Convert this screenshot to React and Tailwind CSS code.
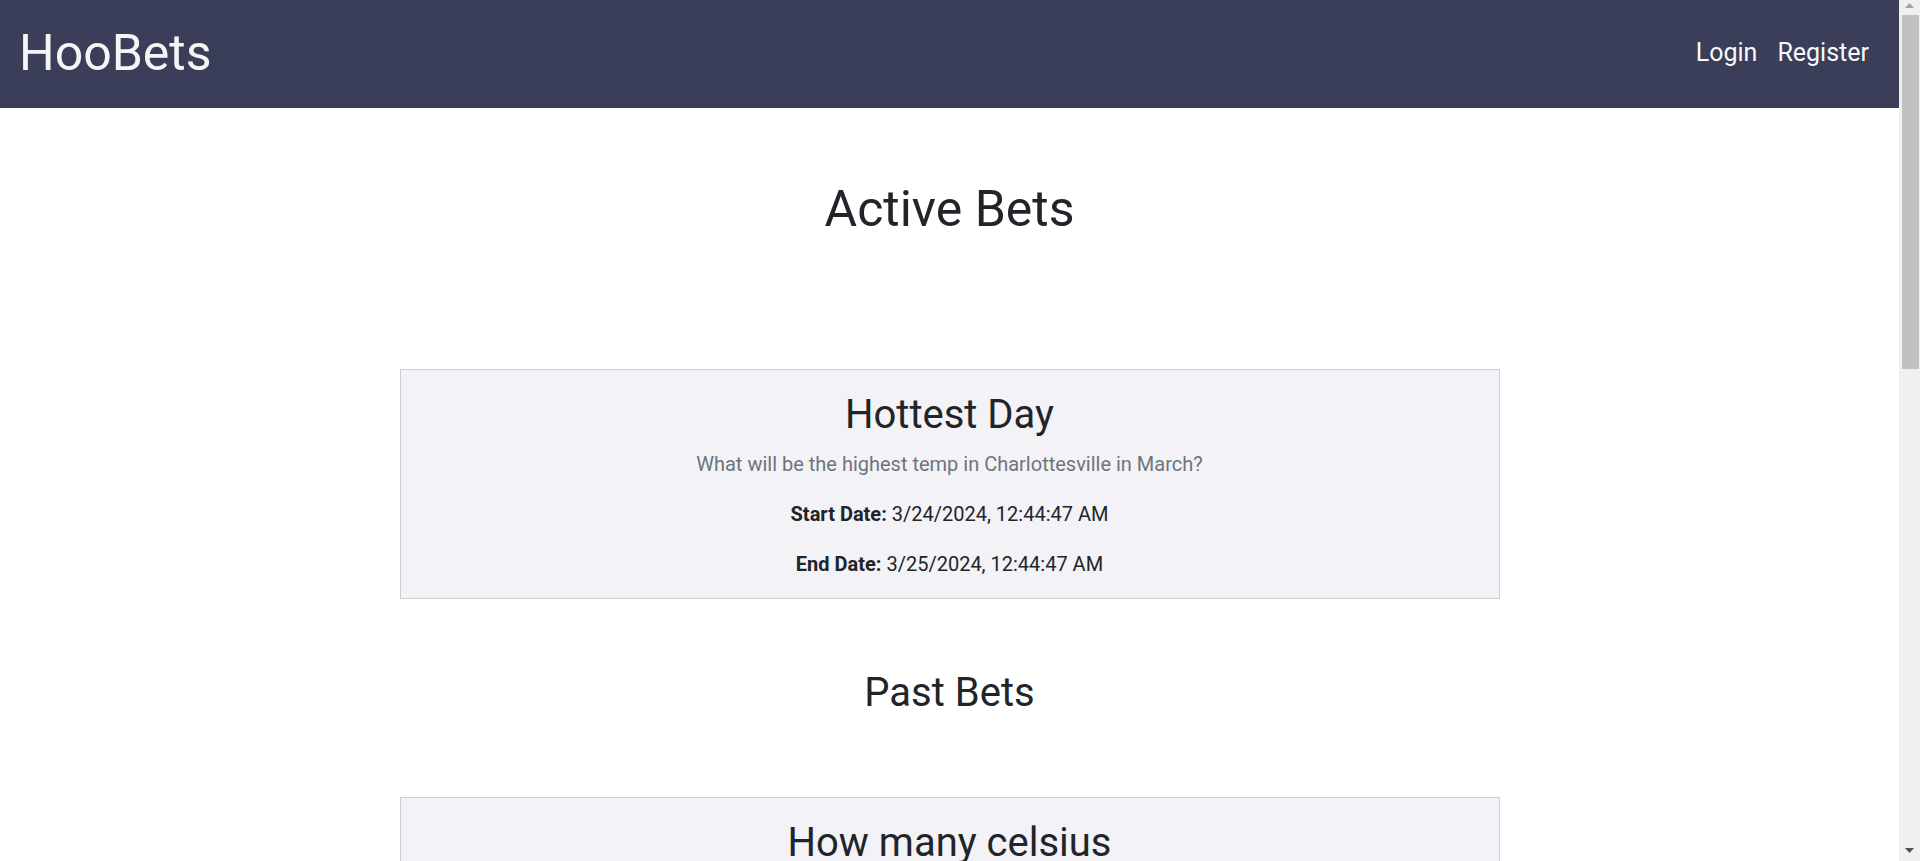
import React from "react";

function BetCard({ title, description, start, end }) {
  return (
    <div className="w-[1100px] border border-[#cccccc] bg-[#f2f2f7] pt-[21px] pb-[19px] text-center">
      <h3 className="text-[40px] leading-[48px] font-normal mb-[10px] text-[#212529]">{title}</h3>
      <p className="text-[20px] leading-[30px] text-[#6c757d] mb-[20px]">{description}</p>
      <p className="text-[20px] leading-[30px] text-[#212529] mb-[20px]">
        <span className="font-bold">Start Date:</span> {start}
      </p>
      <p className="text-[20px] leading-[30px] text-[#212529]">
        <span className="font-bold">End Date:</span> {end}
      </p>
    </div>
  );
}

function Scrollbar() {
  return (
    <div className="sticky top-0 h-screen w-[21px] shrink-0 bg-[#f0f0f0] flex flex-col items-center">
      <svg width="9" height="5" viewBox="0 0 9 5" className="mt-[3px] shrink-0">
        <polygon points="4.5,0 9,5 0,5" fill="#a3a3a3" />
      </svg>
      <div className="mt-[7px] ml-[1px] w-[17px] h-[354px] bg-[#c1c1c1] shrink-0" />
      <div className="flex-1" />
      <svg width="9" height="5" viewBox="0 0 9 5" className="mb-[8px] shrink-0">
        <polygon points="0,0 9,0 4.5,5" fill="#505050" />
      </svg>
    </div>
  );
}

export default function App() {
  const past = [
    {
      title: "How many celsius",
      description: "How many degrees celsius will it be in Charlottesville tomorrow?",
      start: "3/20/2024, 10:15:02 PM",
      end: "3/21/2024, 10:15:02 PM",
    },
    {
      title: "Basketball Score",
      description: "How many points will UVA score in their next game?",
      start: "3/15/2024, 6:30:00 PM",
      end: "3/16/2024, 6:30:00 PM",
    },
    {
      title: "Rainy Days",
      description: "How many days will it rain in February?",
      start: "2/1/2024, 9:00:00 AM",
      end: "2/29/2024, 9:00:00 AM",
    },
    {
      title: "Snowfall",
      description: "How many inches of snow will fall in January?",
      start: "1/1/2024, 9:00:00 AM",
      end: "1/31/2024, 9:00:00 AM",
    },
  ];

  return (
    <div className="flex items-start bg-white font-[Roboto,sans-serif] text-[#212529]">
      <div className="flex-1 min-w-0">
        <header className="h-[108px] bg-[#3a3e58] flex items-center justify-between pl-[19px] pr-[30px] pb-[3px]">
          <div className="text-[50px] leading-[60px] text-[#f5f5f5]">HooBets</div>
          <nav className="flex gap-[20px] text-[25px] leading-[36px] text-[#f8f9fa]">
            <a href="#" className="no-underline">Login</a>
            <a href="#" className="no-underline">Register</a>
          </nav>
        </header>
        <main className="flex flex-col items-center pb-[180px]">
          <h1 className="mt-[71px] text-[50px] leading-[60px] font-normal">Active Bets</h1>
          <div className="mt-[130px] flex flex-col gap-[30px]">
            <BetCard
              title="Hottest Day"
              description="What will be the highest temp in Charlottesville in March?"
              start="3/24/2024, 12:44:47 AM"
              end="3/25/2024, 12:44:47 AM"
            />
          </div>
          <h2 className="mt-[70px] text-[40px] leading-[48px] font-normal">Past Bets</h2>
          <div className="mt-[80px] flex flex-col gap-[30px]">
            {past.map((b) => (
              <BetCard key={b.title} {...b} />
            ))}
          </div>
        </main>
      </div>
      <Scrollbar />
    </div>
  );
}
